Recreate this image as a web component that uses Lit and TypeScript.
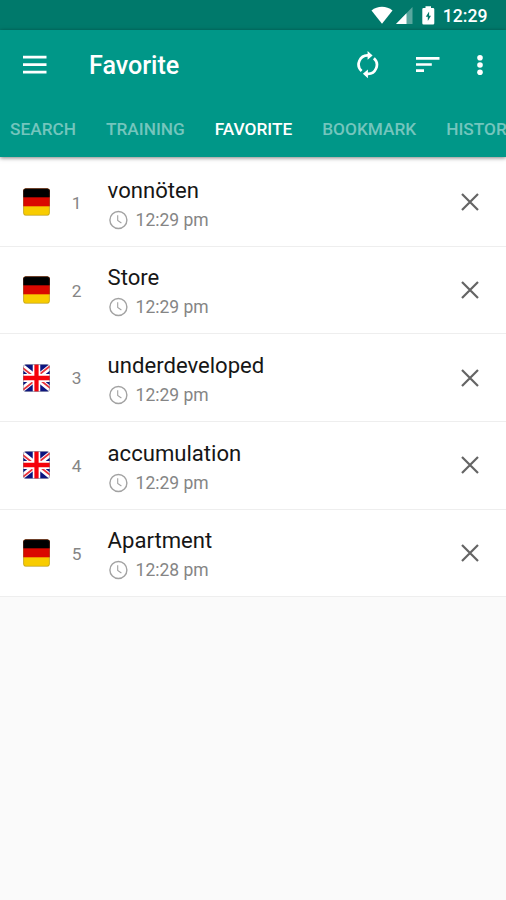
import { LitElement, html, svg, css } from "lit";
import { customElement, property } from "lit/decorators.js";

@customElement("flag-icon")
class FlagIcon extends LitElement {
  @property() country = "de";
  static styles = css`
    :host { display: block; width: 28px; height: 28px; }
    svg { display: block; }
  `;
  render() {
    const de = svg`
      <rect width="28" height="28" fill="#f8cc00"/>
      <rect width="28" height="18.3" fill="#da0800"/>
      <rect width="28" height="9.3" fill="#000"/>`;
    const gb = svg`
      <rect width="28" height="28" fill="#0b1480"/>
      <path d="M-4 0L32 28M32 0L-4 28" stroke="#fff" stroke-width="5.4"/>
      <path d="M-4 1L10 11.8M32 -1L18 9.8M-4 29L10 18.2M32 27L18 16.2" stroke="#e8323c" stroke-width="1.8"/>
      <path d="M14 0V28M0 14H28" stroke="#fff" stroke-width="7.8"/>
      <path d="M14 0V28M0 14H28" stroke="#f5020c" stroke-width="4.4"/>`;
    return html`<svg width="27" height="28" viewBox="0 0 28 28" preserveAspectRatio="none">
      <defs><clipPath id="r"><rect x=".2" y=".4" width="27.6" height="27.2" rx="2.8"/></clipPath></defs>
      <g clip-path="url(#r)">${this.country === "de" ? de : gb}</g>
      <rect x=".6" y=".7" width="26.8" height="26.6" rx="2.5" fill="none" stroke="#555" stroke-opacity=".35" stroke-width=".8"/>
    </svg>`;
  }
}

@customElement("word-row")
class WordRow extends LitElement {
  @property() country = "de";
  @property() index = "";
  @property() word = "";
  @property() time = "";
  static styles = css`
    :host {
      display: flex; align-items: center; box-sizing: border-box; height: 87.7px;
      padding: 0 26px 0 23px; background: #fff; border-bottom: 1px solid #eee;
    }
    .index { width: 28px; margin-left: 11.6px; text-align: center; font-size: 17.3px; color: #858585; line-height: 24px; padding-top: 1px; }
    .body { flex: 1; margin-left: 17px; padding-top: 2.6px; }
    .word { font-size: 22.1px; line-height: 28px; color: #161616; white-space: nowrap; }
    .meta { display: flex; align-items: center; gap: 8px; height: 24px; margin-top: 4px; }
    .time { font-size: 17.5px; line-height: 24px; color: #858585; white-space: nowrap; }
    svg { display: block; flex: none; }
  `;
  render() {
    return html`
      <flag-icon country=${this.country}></flag-icon>
      <div class="index">${this.index}</div>
      <div class="body">
        <div class="word">${this.word}</div>
        <div class="meta">
          <svg width="20" height="20" viewBox="0 0 20 20" fill="none" stroke="#a2a2a2">
            <circle cx="10.4" cy="10" r="8.5" stroke-width="1.4"/>
            <path d="M9.7 5.2V10.4L13.4 13" stroke-width="1.1"/>
          </svg>
          <span class="time">${this.time}</span>
        </div>
      </div>
      <svg width="20" height="20" viewBox="0 0 20 20"><path d="M2 2L18 18M18 2L2 18" stroke="#646464" stroke-width="2.2"/></svg>
    `;
  }
}

@customElement("app-root")
class AppRoot extends LitElement {
  static styles = css`
    :host { display: block; height: 900px; background: #fafafa; overflow: hidden; font-family: Roboto, sans-serif; }
    svg { display: block; flex: none; }
    .status {
      display: flex; align-items: center; justify-content: flex-end; box-sizing: border-box;
      height: 30px; padding: 2px 18.5px 0 0; background: #00796b; color: #fff;
    }
    .clock { margin-left: 7.6px; font-size: 17.6px; font-weight: 500; line-height: 24px; }
    .header { position: relative; height: 127.4px; background: #009788; box-shadow: 0 1px 4px rgba(0,0,0,.5); }
    .bar { display: flex; align-items: center; height: 69px; padding: 0 22.5px 0 22px; }
    .title { flex: 1; margin: 2.5px 0 0 42px; font-size: 25.1px; line-height: 30px; font-weight: 500; color: #fff; }
    .sync { margin-right: 35.5px; }
    .sort { margin-right: 36px; }
    .tabs { display: flex; gap: 30px; padding: 18px 0 0 10px; overflow: hidden; white-space: nowrap; }
    .tab { flex: none; font-size: 17.25px; line-height: 24px; font-weight: 500; color: #74c5bd; }
    .tab.active { color: #fff; }
    main { padding-top: 1.6px; background: linear-gradient(#fff 2px, #fafafa 2px); }
  `;
  render() {
    const tabs = ["SEARCH", "TRAINING", "FAVORITE", "BOOKMARK", "HISTORY"];
    const rows = [
      ["de", "vonnöten", "12:29 pm"],
      ["de", "Store", "12:29 pm"],
      ["gb", "underdeveloped", "12:29 pm"],
      ["gb", "accumulation", "12:29 pm"],
      ["de", "Apartment", "12:28 pm"],
    ];
    return html`
      <div class="status">
        <svg width="64" height="22" viewBox="0 0 64 22" fill="#fff">
          <path d="M0.5 5.6C6.5 .6 15.5 .6 21.5 5.6L11 18.8Z"/>
          <path d="M41.5 2V19H25Z" fill-opacity=".35"/>
          <path d="M35.5 8.2V19H25Z"/>
          <path fill-rule="evenodd" d="M54.5 1.2H60V3H62Q63.3 3 63.3 4.3V18.2Q63.3 19.5 62 19.5H52.6Q51.3 19.5 51.3 18.2V4.3Q51.3 3 52.6 3H54.5ZM58.1 6.4L54.8 11.8H56.8V16L60 10.8H58.1Z"/>
        </svg>
        <div class="clock">12:29</div>
      </div>
      <div class="header">
        <div class="bar">
          <svg width="25" height="20" viewBox="0 0 25 20" stroke="#fff" stroke-width="2.8"><path d="M1 2.2H24.5M1 9.7H24.5M1 17.1H24.5"/></svg>
          <div class="title">Favorite</div>
          <svg class="sync" width="22" height="28" viewBox="0 0 22 28">
            <path d="M4.6 20A9 9 0 0 1 11.4 4.4M16.9 7.2A9 9 0 0 1 10.1 22.8" fill="none" stroke="#fff" stroke-width="2.7"/>
            <path d="M10.6 0L15.6 4.4L10.6 8.8ZM10.9 18.4L5.9 22.8L10.9 27.2Z" fill="#fff"/>
          </svg>
          <svg class="sort" width="25" height="20" viewBox="0 0 25 20" stroke="#fff" stroke-width="2.7"><path d="M1 3.3H24.5M1 9.5H16.8M1 15.7H9"/></svg>
          <svg width="8" height="24" viewBox="0 0 8 24" fill="#fff"><circle cx="4" cy="4.8" r="2.8"/><circle cx="4" cy="12" r="2.8"/><circle cx="4" cy="19.2" r="2.8"/></svg>
        </div>
        <div class="tabs">${tabs.map((t) => html`<div class="tab ${t === "FAVORITE" ? "active" : ""}">${t}</div>`)}</div>
      </div>
      <main>
        ${rows.map(([c, w, t], i) => html`<word-row country=${c} index=${String(i + 1)} word=${w} time=${t}></word-row>`)}
      </main>
    `;
  }
}
